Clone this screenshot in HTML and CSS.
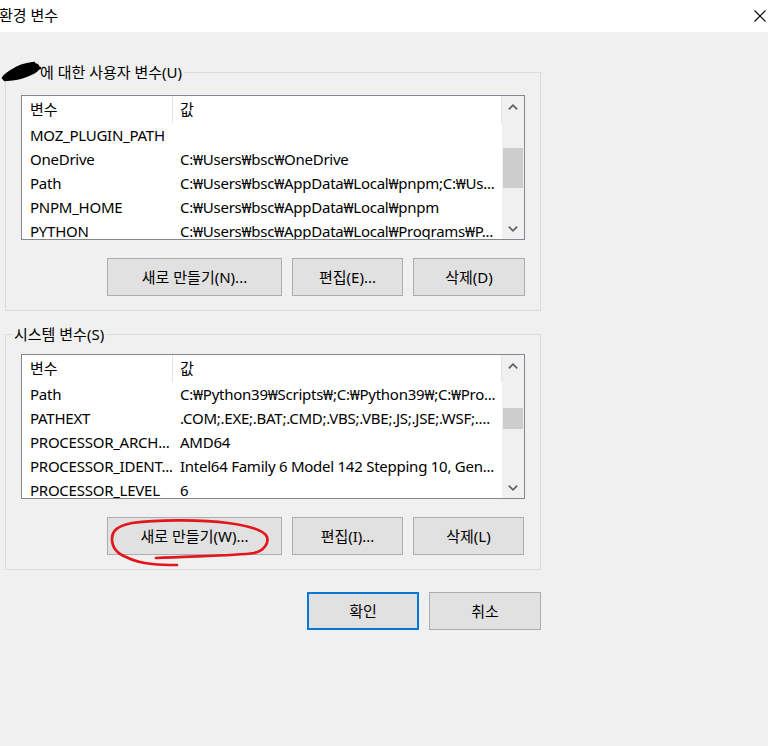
FILE: index.html
```html
<!DOCTYPE html>
<html lang="ko">
<head>
<meta charset="utf-8">
<title>환경 변수</title>
<link rel="stylesheet" href="styles.css">
</head>
<body>
<div class="titlebar">
  <span class="title">환경 변수</span>
  <span class="close"><svg width="12" height="12" viewBox="0 0 12 12"><path d="M0.5 0.5L11.5 11.5M11.5 0.5L0.5 11.5" stroke="#000" stroke-width="1.1" fill="none"/></svg></span>
</div>
<div class="main">
  <section class="group g1">
    <div class="legend"><span class="user"></span>에 대한 사용자 변수(U)</div>
    <div class="list">
      <div class="table">
        <div class="row head"><span class="c1">변수</span><span class="c2">값</span></div>
        <div class="row"><span class="c1">MOZ_PLUGIN_PATH</span><span class="c2"></span></div>
        <div class="row"><span class="c1">OneDrive</span><span class="c2">C:₩Users₩bsc₩OneDrive</span></div>
        <div class="row"><span class="c1">Path</span><span class="c2">C:₩Users₩bsc₩AppData₩Local₩pnpm;C:₩Us...</span></div>
        <div class="row"><span class="c1">PNPM_HOME</span><span class="c2">C:₩Users₩bsc₩AppData₩Local₩pnpm</span></div>
        <div class="row"><span class="c1">PYTHON</span><span class="c2">C:₩Users₩bsc₩AppData₩Local₩Programs₩P...</span></div>
      </div>
      <div class="scroll">
        <div class="arrow"><svg width="10" height="6" viewBox="0 0 10 6"><polyline points="0.8,5.4 5,1.2 9.2,5.4" fill="none" stroke="#606060" stroke-width="1.7"/></svg></div>
        <div class="track"><div class="thumb t1"></div></div>
        <div class="arrow"><svg width="10" height="6" viewBox="0 0 10 6"><polyline points="0.8,0.6 5,4.8 9.2,0.6" fill="none" stroke="#606060" stroke-width="1.7"/></svg></div>
      </div>
    </div>
    <div class="buttons">
      <button class="btn wide">새로 만들기(N)...</button>
      <button class="btn">편집(E)...</button>
      <button class="btn last">삭제(D)</button>
    </div>
  </section>

  <section class="group g2">
    <div class="legend">시스템 변수(S)</div>
    <div class="list">
      <div class="table">
        <div class="row head"><span class="c1">변수</span><span class="c2">값</span></div>
        <div class="row"><span class="c1">Path</span><span class="c2">C:₩Python39₩Scripts₩;C:₩Python39₩;C:₩Pro...</span></div>
        <div class="row"><span class="c1">PATHEXT</span><span class="c2">.COM;.EXE;.BAT;.CMD;.VBS;.VBE;.JS;.JSE;.WSF;....</span></div>
        <div class="row"><span class="c1">PROCESSOR_ARCH...</span><span class="c2">AMD64</span></div>
        <div class="row"><span class="c1">PROCESSOR_IDENT...</span><span class="c2">Intel64 Family 6 Model 142 Stepping 10, Gen...</span></div>
        <div class="row"><span class="c1">PROCESSOR_LEVEL</span><span class="c2">6</span></div>
      </div>
      <div class="scroll">
        <div class="arrow"><svg width="10" height="6" viewBox="0 0 10 6"><polyline points="0.8,5.4 5,1.2 9.2,5.4" fill="none" stroke="#606060" stroke-width="1.7"/></svg></div>
        <div class="track"><div class="thumb t2"></div></div>
        <div class="arrow"><svg width="10" height="6" viewBox="0 0 10 6"><polyline points="0.8,0.6 5,4.8 9.2,0.6" fill="none" stroke="#606060" stroke-width="1.7"/></svg></div>
      </div>
    </div>
    <div class="buttons">
      <button class="btn wide">새로 만들기(W)...</button>
      <button class="btn">편집(I)...</button>
      <button class="btn last">삭제(L)</button>
    </div>
  </section>

  <div class="dialog-buttons">
    <button class="btn default">확인</button>
    <button class="btn">취소</button>
  </div>
</div>

<svg class="marks" width="768" height="746" viewBox="0 0 768 746">
  <path d="M4 77 C 7 70, 18 65, 30 63 C 38 62, 42 66, 38 71 C 31 77, 16 81, 7 81 C 2 81, 2 79, 4 77 Z" fill="#000"/>
  <path d="M3 78 C 8 71, 22 66, 37 65 M5 80 C 14 76, 28 72, 40 68 M14 70 C 18 66, 26 64, 34 63" stroke="#000" stroke-width="2.6" fill="none" stroke-linecap="round"/>
  <path d="M156 558 C 190 556, 235 556, 254 553 C 264 551, 269 543, 267 537 C 264 530, 250 526, 228 523 C 205 520, 160 519, 132 523 C 117 526, 112 531, 112 539 C 112 547, 116 553, 126 557 C 134 561, 142 563, 152 564 C 162 565, 170 565, 177 565" stroke="#e3161b" stroke-width="2.7" fill="none" stroke-linecap="round"/>
</svg>
</body>
</html>
```

FILE: styles.css
```css
* { box-sizing: border-box; }

html, body {
  margin: 0;
  padding: 0;
}

body {
  width: 768px;
  height: 746px;
  background: #f0f0f0;
  font-family: "Noto Sans", "Noto Sans CJK KR", sans-serif;
  font-size: 15px;
  color: #000;
  position: relative;
  overflow: hidden;
}

.titlebar {
  height: 32px;
  background: #fff;
  display: flex;
  align-items: center;
  justify-content: space-between;
  padding: 0 2px 2px 0;
}

.title {
  font-size: 15px;
  line-height: 20px;
  margin-left: -1px;
}

.close {
  display: flex;
  align-items: center;
  padding-top: 2px;
}

.main {
  padding: 40px 0 0 5px;
}

.group {
  width: 536px;
  border: 1px solid #dcdcdc;
  padding: 0 15px 14px 15px;
}

.g2 {
  margin-top: 23px;
  padding-bottom: 14px;
}

.legend {
  display: flex;
  align-items: center;
  width: max-content;
  height: 20px;
  line-height: 20px;
  margin: -11px 0 0 -8px;
  padding: 0 2px 0 1px;
  background: #f0f0f0;
}

.user {
  display: inline-block;
  width: 26px;
}

.list {
  display: flex;
  width: 504px;
  height: 145px;
  border: 1px solid #828790;
  background: #fff;
  margin-top: 13px;
}

.g2 .list {
  margin-top: 10px;
}

.table {
  width: 480px;
  overflow: hidden;
}

.row {
  display: flex;
  height: 24px;
  line-height: 24px;
  white-space: nowrap;
  letter-spacing: -0.25px;
}

.row.head {
  height: 27px;
  line-height: 27px;
  border-right: 1px solid #e5e5e5;
  letter-spacing: 0;
}

.c1 {
  width: 150px;
  flex: none;
  padding-left: 8px;
  overflow: hidden;
}

.c2 {
  flex: 1;
  padding-left: 8px;
  overflow: hidden;
}

.head .c1 {
  width: 151px;
  border-right: 1px solid #e5e5e5;
}

.head .c2 {
  padding-left: 7px;
}

.scroll {
  width: 22px;
  background: #f0f0f0;
  display: flex;
  flex-direction: column;
}

.arrow {
  height: 21px;
  display: flex;
  align-items: center;
  justify-content: center;
  flex: none;
}

.track {
  flex: 1;
  padding: 0 1px;
}

.thumb {
  background: #cdcdcd;
  width: 100%;
}

.t1 {
  margin-top: 31px;
  height: 40px;
}

.t2 {
  margin-top: 32px;
  height: 21px;
}

.buttons {
  display: flex;
  justify-content: flex-end;
  gap: 10px;
  margin-top: 18px;
  padding-right: 0;
}

.g2 .buttons {
  margin-top: 18px;
}

.btn {
  font-family: "Noto Sans", "Noto Sans CJK KR", sans-serif;
  font-size: 15px;
  color: #000;
  background: #e1e1e1;
  border: 1px solid #adadad;
  height: 38px;
  width: 111px;
  padding: 0;
  margin: 0;
  line-height: 20px;
}

.btn.wide {
  width: 175px;
}

.buttons .btn.last {
  width: 112px;
}

.g2 .buttons .btn.last {
  width: 111px;
  margin-right: 1px;
}

.dialog-buttons {
  display: flex;
  justify-content: flex-end;
  gap: 10px;
  width: 536px;
  margin-top: 22px;
}

.dialog-buttons .btn {
  width: 112px;
}

.btn.default {
  border: 2px solid #0078d7;
}

.marks {
  position: absolute;
  left: 0;
  top: 0;
  pointer-events: none;
}
```
